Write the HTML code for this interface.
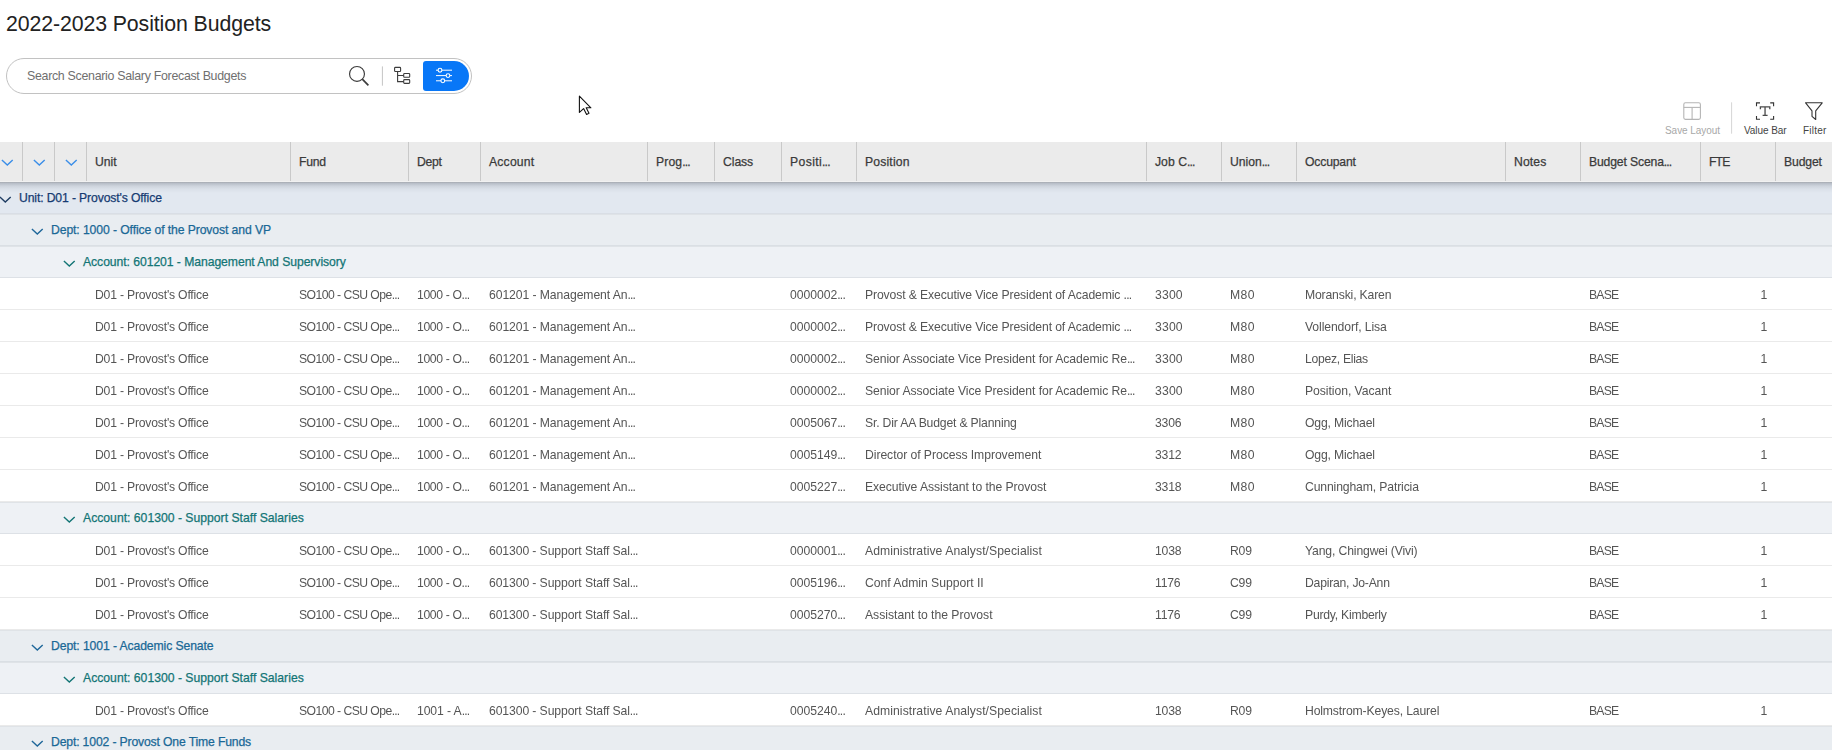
<!DOCTYPE html>
<html><head><meta charset="utf-8"><title>2022-2023 Position Budgets</title>
<style>
*{box-sizing:border-box;margin:0;padding:0}
html,body{width:1832px;height:750px;overflow:hidden;background:#fff}
body{position:relative;font-family:"Liberation Sans",sans-serif;color:#333}
.title{position:absolute;left:6px;top:11px;font-size:21.3px;line-height:26px;color:#222;white-space:nowrap;letter-spacing:-0.1px}
.search{position:absolute;left:6px;top:58px;width:466px;height:36px;border:1px solid #c2c2c2;border-radius:18px;background:#fff}
.ph{position:absolute;left:20px;top:10px;font-size:12.4px;line-height:15px;color:#6f6f6f;white-space:nowrap;letter-spacing:-0.30px}
.abs{position:absolute}
svg{display:block}
.hdr{position:absolute;left:0;top:142px;width:1832px;height:40px;background:#ebebeb}
.sep{position:absolute;top:0;width:1px;height:40px;background:#c9c9c9}
.ht{position:absolute;top:13px;font-size:12.2px;line-height:15px;color:#3a3a3a;-webkit-text-stroke:0.25px #3a3a3a;white-space:nowrap;letter-spacing:-0.2px}
.shadow{position:absolute;left:0;top:182px;width:1832px;height:11px;background:linear-gradient(to bottom,rgba(20,28,45,.28) 0px,rgba(20,28,45,.2) 1.5px,rgba(20,28,45,.1) 4px,rgba(20,28,45,.04) 7px,rgba(20,28,45,0) 11px);z-index:5}
.hline{position:absolute;left:0;top:39px;width:1832px;height:1px;background:#f1f1f1}
.row{position:absolute;left:0;width:1832px;height:32px;border-bottom:1px solid #eaeaea}
.dr{will-change:transform}
.g1,.g2,.g3{box-shadow:inset 0 1px 0 #dfe3e7}
.g1{background:#e2e8f0;border-bottom-color:#d9dee5}
.g2{background:#e9edf1;border-bottom-color:#dadfe4}
.g3{background:#eef1f5;border-bottom-color:#dde1e6}
.gt{position:absolute;top:9px;font-size:12.2px;line-height:15px;white-space:nowrap;letter-spacing:-0.08px;-webkit-text-stroke:0.25px currentColor}
.g1 .gt{color:#163b72}
.g2 .gt{color:#1a6896}
.g3 .gt{color:#137575}
.c{position:absolute;top:10px;font-size:12.2px;line-height:15px;color:#555;white-space:nowrap;letter-spacing:-0.2px}
.el{letter-spacing:-0.85px}
.tb{position:absolute;top:124.6px;font-size:10px;line-height:12px;white-space:nowrap;text-align:center;color:#444}
</style></head><body>
<div class="title">2022-2023 Position Budgets</div>
<div class="search"><div class="ph">Search Scenario Salary Forecast Budgets</div>
<svg class="abs" style="left:-1px;top:-1px" width="466" height="36" viewBox="6 58 466 36">
 <circle cx="357" cy="73.9" r="7.45" fill="none" stroke="#3c3c3c" stroke-width="1.15"/>
 <line x1="362.3" y1="79.2" x2="368.4" y2="85.3" stroke="#3c3c3c" stroke-width="1.7"/>
 <line x1="382.4" y1="66.4" x2="382.4" y2="85.7" stroke="#c4c4c4" stroke-width="1"/>
 <rect x="394.6" y="67.4" width="6" height="4.1" rx="0.8" fill="none" stroke="#3c3c3c" stroke-width="1.1"/>
 <path d="M397.6 71.5 V81.6 H403.7 M397.6 75.5 H403.7" fill="none" stroke="#3c3c3c" stroke-width="1.1"/>
 <rect x="403.7" y="73.5" width="6" height="3.8" rx="0.8" fill="none" stroke="#3c3c3c" stroke-width="1.1"/>
 <rect x="403.7" y="79.6" width="6" height="3.8" rx="0.8" fill="none" stroke="#3c3c3c" stroke-width="1.1"/>
 <path d="M423 64 a3 3 0 0 1 3 -3 H454 a15 15 0 0 1 0 30 H426 a3 3 0 0 1 -3 -3 Z" fill="#0877f7"/>
 <g stroke="#fff" stroke-width="1" fill="none">
  <line x1="436" y1="70.2" x2="452" y2="70.2"/>
  <line x1="436" y1="75.6" x2="452" y2="75.6"/>
  <line x1="436" y1="80.8" x2="452" y2="80.8"/>
 </g>
 <g stroke="#fff" stroke-width="1.1" fill="#0877f7">
  <circle cx="440" cy="70.2" r="1.9"/>
  <circle cx="448" cy="75.6" r="1.9"/>
  <circle cx="442.8" cy="80.8" r="1.9"/>
 </g>
</svg>
</div>

<svg class="abs" style="left:0;top:0" width="1832" height="140" viewBox="0 0 1832 140">
 <rect x="1683.8" y="102.8" width="16.6" height="16.6" rx="1.6" fill="none" stroke="#b5b5b5" stroke-width="1.1"/>
 <line x1="1683.8" y1="107.4" x2="1700.4" y2="107.4" stroke="#b5b5b5" stroke-width="1.1"/>
 <line x1="1692.1" y1="107.4" x2="1692.1" y2="119.4" stroke="#b5b5b5" stroke-width="1.1"/>
 <line x1="1731.6" y1="102.3" x2="1731.6" y2="133.7" stroke="#d6d6d6" stroke-width="1"/>
 <path d="M1756.5 106.2 V102.9 H1760 M1770.2 102.9 H1773.6 V106.2 M1773.6 116 V119.2 H1770.2 M1760 119.2 H1756.5 V116" fill="none" stroke="#333" stroke-width="1.1"/>
 <path d="M1760.4 109.2 V106.8 H1769.8 V109.2 M1765.05 106.8 V115.6 M1762.6 115.4 H1767.6" fill="none" stroke="#4a4a4a" stroke-width="1.3"/>
 <path d="M1805.6 102.8 H1822.2 L1815.7 110.8 V119.5 L1812 116.3 V110.8 Z" fill="none" stroke="#333" stroke-width="1.1" stroke-linejoin="round"/>
</svg>

<div class="tb" style="left:1665px;color:#a8a8a8;letter-spacing:-0.05px">Save Layout</div>
<div class="tb" style="left:1744px;letter-spacing:-0.07px">Value Bar</div>
<div class="tb" style="left:1803px;letter-spacing:0.2px">Filter</div>

<div class="hdr">
<div class="sep" style="left:22px"></div>
<div class="sep" style="left:54px"></div>
<div class="sep" style="left:86px"></div>
<div class="sep" style="left:290px"></div>
<div class="sep" style="left:408px"></div>
<div class="sep" style="left:480px"></div>
<div class="sep" style="left:647px"></div>
<div class="sep" style="left:714px"></div>
<div class="sep" style="left:781px"></div>
<div class="sep" style="left:856px"></div>
<div class="sep" style="left:1146px"></div>
<div class="sep" style="left:1221px"></div>
<div class="sep" style="left:1296px"></div>
<div class="sep" style="left:1505px"></div>
<div class="sep" style="left:1580px"></div>
<div class="sep" style="left:1700px"></div>
<div class="sep" style="left:1775px"></div>
<div class="abs" style="left:0.9px;top:17.2px"><svg width="13" height="8" viewBox="0 0 13 8"><path d="M0.9 0.9 L6.3 6.1 L11.7 0.9" fill="none" stroke="#3b8ee8" stroke-width="1.4"/></svg></div>
<div class="abs" style="left:32.7px;top:17.2px"><svg width="13" height="8" viewBox="0 0 13 8"><path d="M0.9 0.9 L6.3 6.1 L11.7 0.9" fill="none" stroke="#3b8ee8" stroke-width="1.4"/></svg></div>
<div class="abs" style="left:64.7px;top:17.2px"><svg width="13" height="8" viewBox="0 0 13 8"><path d="M0.9 0.9 L6.3 6.1 L11.7 0.9" fill="none" stroke="#3b8ee8" stroke-width="1.4"/></svg></div>
<div class="ht" style="left:95px;letter-spacing:-0.020px">Unit</div>
<div class="ht" style="left:299px;letter-spacing:-0.260px">Fund</div>
<div class="ht" style="left:417px;letter-spacing:-0.260px">Dept</div>
<div class="ht" style="left:489px;letter-spacing:0.190px">Account</div>
<div class="ht" style="left:656px;letter-spacing:0.100px">Prog<span class="el">...</span></div>
<div class="ht" style="left:723px;letter-spacing:-0.065px">Class</div>
<div class="ht" style="left:790px;letter-spacing:0.376px">Positi<span class="el">...</span></div>
<div class="ht" style="left:865px;letter-spacing:0.160px">Position</div>
<div class="ht" style="left:1155px;letter-spacing:0.025px">Job C<span class="el">...</span></div>
<div class="ht" style="left:1230px;letter-spacing:-0.020px">Union<span class="el">...</span></div>
<div class="ht" style="left:1305px;letter-spacing:-0.174px">Occupant</div>
<div class="ht" style="left:1514px;letter-spacing:0.115px">Notes</div>
<div class="ht" style="left:1589px;letter-spacing:-0.151px">Budget Scena<span class="el">...</span></div>
<div class="ht" style="left:1709px;letter-spacing:-0.830px">FTE</div>
<div class="ht" style="left:1784px;letter-spacing:-0.128px">Budget</div>
<div class="hline"></div></div><div class="shadow"></div>
<div class="row g1" style="top:182px"><div class="abs" style="left:-0.9px;top:13.8px"><svg width="13" height="8" viewBox="0 0 13 8"><path d="M0.9 0.9 L6.3 6.1 L11.7 0.9" fill="none" stroke="#1f3d63" stroke-width="1.4"/></svg></div><div class="gt" style="left:19px;letter-spacing:-0.127px">Unit: D01 - Provost's Office</div></div>
<div class="row g2" style="top:214px"><div class="abs" style="left:30.950000000000003px;top:13.8px"><svg width="13" height="8" viewBox="0 0 13 8"><path d="M0.9 0.9 L6.3 6.1 L11.7 0.9" fill="none" stroke="#1f679a" stroke-width="1.4"/></svg></div><div class="gt" style="left:51px;letter-spacing:-0.098px">Dept: 1000 - Office of the Provost and VP</div></div>
<div class="row g3" style="top:246px"><div class="abs" style="left:62.800000000000004px;top:13.8px"><svg width="13" height="8" viewBox="0 0 13 8"><path d="M0.9 0.9 L6.3 6.1 L11.7 0.9" fill="none" stroke="#137575" stroke-width="1.4"/></svg></div><div class="gt" style="left:83px;letter-spacing:-0.063px">Account: 601201 - Management And Supervisory</div></div>
<div class="row dr" style="top:278px">
<div class="c" style="left:95px;letter-spacing:-0.200px">D01 - Provost's Office</div>
<div class="c" style="left:299px;letter-spacing:-0.547px">SO100 - CSU Ope<span class="el">...</span></div>
<div class="c" style="left:417px;letter-spacing:-0.354px">1000 - O<span class="el">...</span></div>
<div class="c" style="left:489px;letter-spacing:-0.080px">601201 - Management An<span class="el">...</span></div>
<div class="c" style="left:790px;letter-spacing:-0.020px">0000002<span class="el">...</span></div>
<div class="c" style="left:865px;letter-spacing:-0.114px">Provost &amp; Executive Vice President of Academic <span class="el">...</span></div>
<div class="c" style="left:1155px;letter-spacing:0.160px">3300</div>
<div class="c" style="left:1230px;letter-spacing:0.430px">M80</div>
<div class="c" style="left:1305px;letter-spacing:-0.161px">Moranski, Karen</div>
<div class="c" style="left:1589px;letter-spacing:-0.800px">BASE</div>
<div class="c" style="left:1700px;width:67px;text-align:right">1</div>
</div>
<div class="row dr" style="top:310px">
<div class="c" style="left:95px;letter-spacing:-0.200px">D01 - Provost's Office</div>
<div class="c" style="left:299px;letter-spacing:-0.547px">SO100 - CSU Ope<span class="el">...</span></div>
<div class="c" style="left:417px;letter-spacing:-0.354px">1000 - O<span class="el">...</span></div>
<div class="c" style="left:489px;letter-spacing:-0.080px">601201 - Management An<span class="el">...</span></div>
<div class="c" style="left:790px;letter-spacing:-0.020px">0000002<span class="el">...</span></div>
<div class="c" style="left:865px;letter-spacing:-0.114px">Provost &amp; Executive Vice President of Academic <span class="el">...</span></div>
<div class="c" style="left:1155px;letter-spacing:0.160px">3300</div>
<div class="c" style="left:1230px;letter-spacing:0.430px">M80</div>
<div class="c" style="left:1305px;letter-spacing:-0.104px">Vollendorf, Lisa</div>
<div class="c" style="left:1589px;letter-spacing:-0.800px">BASE</div>
<div class="c" style="left:1700px;width:67px;text-align:right">1</div>
</div>
<div class="row dr" style="top:342px">
<div class="c" style="left:95px;letter-spacing:-0.200px">D01 - Provost's Office</div>
<div class="c" style="left:299px;letter-spacing:-0.547px">SO100 - CSU Ope<span class="el">...</span></div>
<div class="c" style="left:417px;letter-spacing:-0.354px">1000 - O<span class="el">...</span></div>
<div class="c" style="left:489px;letter-spacing:-0.080px">601201 - Management An<span class="el">...</span></div>
<div class="c" style="left:790px;letter-spacing:-0.020px">0000002<span class="el">...</span></div>
<div class="c" style="left:865px;letter-spacing:-0.071px">Senior Associate Vice President for Academic Re<span class="el">...</span></div>
<div class="c" style="left:1155px;letter-spacing:0.160px">3300</div>
<div class="c" style="left:1230px;letter-spacing:0.430px">M80</div>
<div class="c" style="left:1305px;letter-spacing:-0.298px">Lopez, Elias</div>
<div class="c" style="left:1589px;letter-spacing:-0.800px">BASE</div>
<div class="c" style="left:1700px;width:67px;text-align:right">1</div>
</div>
<div class="row dr" style="top:374px">
<div class="c" style="left:95px;letter-spacing:-0.200px">D01 - Provost's Office</div>
<div class="c" style="left:299px;letter-spacing:-0.547px">SO100 - CSU Ope<span class="el">...</span></div>
<div class="c" style="left:417px;letter-spacing:-0.354px">1000 - O<span class="el">...</span></div>
<div class="c" style="left:489px;letter-spacing:-0.080px">601201 - Management An<span class="el">...</span></div>
<div class="c" style="left:790px;letter-spacing:-0.020px">0000002<span class="el">...</span></div>
<div class="c" style="left:865px;letter-spacing:-0.071px">Senior Associate Vice President for Academic Re<span class="el">...</span></div>
<div class="c" style="left:1155px;letter-spacing:0.160px">3300</div>
<div class="c" style="left:1230px;letter-spacing:0.430px">M80</div>
<div class="c" style="left:1305px;letter-spacing:-0.056px">Position, Vacant</div>
<div class="c" style="left:1589px;letter-spacing:-0.800px">BASE</div>
<div class="c" style="left:1700px;width:67px;text-align:right">1</div>
</div>
<div class="row dr" style="top:406px">
<div class="c" style="left:95px;letter-spacing:-0.200px">D01 - Provost's Office</div>
<div class="c" style="left:299px;letter-spacing:-0.547px">SO100 - CSU Ope<span class="el">...</span></div>
<div class="c" style="left:417px;letter-spacing:-0.354px">1000 - O<span class="el">...</span></div>
<div class="c" style="left:489px;letter-spacing:-0.080px">601201 - Management An<span class="el">...</span></div>
<div class="c" style="left:790px;letter-spacing:-0.020px">0005067<span class="el">...</span></div>
<div class="c" style="left:865px;letter-spacing:-0.173px">Sr. Dir AA Budget &amp; Planning</div>
<div class="c" style="left:1155px;letter-spacing:-0.200px">3306</div>
<div class="c" style="left:1230px;letter-spacing:0.430px">M80</div>
<div class="c" style="left:1305px;letter-spacing:-0.167px">Ogg, Michael</div>
<div class="c" style="left:1589px;letter-spacing:-0.800px">BASE</div>
<div class="c" style="left:1700px;width:67px;text-align:right">1</div>
</div>
<div class="row dr" style="top:438px">
<div class="c" style="left:95px;letter-spacing:-0.200px">D01 - Provost's Office</div>
<div class="c" style="left:299px;letter-spacing:-0.547px">SO100 - CSU Ope<span class="el">...</span></div>
<div class="c" style="left:417px;letter-spacing:-0.354px">1000 - O<span class="el">...</span></div>
<div class="c" style="left:489px;letter-spacing:-0.080px">601201 - Management An<span class="el">...</span></div>
<div class="c" style="left:790px;letter-spacing:-0.020px">0005149<span class="el">...</span></div>
<div class="c" style="left:865px;letter-spacing:-0.062px">Director of Process Improvement</div>
<div class="c" style="left:1155px;letter-spacing:-0.200px">3312</div>
<div class="c" style="left:1230px;letter-spacing:0.430px">M80</div>
<div class="c" style="left:1305px;letter-spacing:-0.167px">Ogg, Michael</div>
<div class="c" style="left:1589px;letter-spacing:-0.800px">BASE</div>
<div class="c" style="left:1700px;width:67px;text-align:right">1</div>
</div>
<div class="row dr" style="top:470px">
<div class="c" style="left:95px;letter-spacing:-0.200px">D01 - Provost's Office</div>
<div class="c" style="left:299px;letter-spacing:-0.547px">SO100 - CSU Ope<span class="el">...</span></div>
<div class="c" style="left:417px;letter-spacing:-0.354px">1000 - O<span class="el">...</span></div>
<div class="c" style="left:489px;letter-spacing:-0.080px">601201 - Management An<span class="el">...</span></div>
<div class="c" style="left:790px;letter-spacing:-0.020px">0005227<span class="el">...</span></div>
<div class="c" style="left:865px;letter-spacing:-0.064px">Executive Assistant to the Provost</div>
<div class="c" style="left:1155px;letter-spacing:-0.200px">3318</div>
<div class="c" style="left:1230px;letter-spacing:0.430px">M80</div>
<div class="c" style="left:1305px;letter-spacing:-0.134px">Cunningham, Patricia</div>
<div class="c" style="left:1589px;letter-spacing:-0.800px">BASE</div>
<div class="c" style="left:1700px;width:67px;text-align:right">1</div>
</div>
<div class="row g3" style="top:502px"><div class="abs" style="left:62.800000000000004px;top:13.8px"><svg width="13" height="8" viewBox="0 0 13 8"><path d="M0.9 0.9 L6.3 6.1 L11.7 0.9" fill="none" stroke="#137575" stroke-width="1.4"/></svg></div><div class="gt" style="left:83px;letter-spacing:0.003px">Account: 601300 - Support Staff Salaries</div></div>
<div class="row dr" style="top:534px">
<div class="c" style="left:95px;letter-spacing:-0.200px">D01 - Provost's Office</div>
<div class="c" style="left:299px;letter-spacing:-0.547px">SO100 - CSU Ope<span class="el">...</span></div>
<div class="c" style="left:417px;letter-spacing:-0.354px">1000 - O<span class="el">...</span></div>
<div class="c" style="left:489px;letter-spacing:-0.099px">601300 - Support Staff Sal<span class="el">...</span></div>
<div class="c" style="left:790px;letter-spacing:-0.020px">0000001<span class="el">...</span></div>
<div class="c" style="left:865px;letter-spacing:0.064px">Administrative Analyst/Specialist</div>
<div class="c" style="left:1155px;letter-spacing:-0.200px">1038</div>
<div class="c" style="left:1230px;letter-spacing:-0.200px">R09</div>
<div class="c" style="left:1305px;letter-spacing:-0.137px">Yang, Chingwei (Vivi)</div>
<div class="c" style="left:1589px;letter-spacing:-0.800px">BASE</div>
<div class="c" style="left:1700px;width:67px;text-align:right">1</div>
</div>
<div class="row dr" style="top:566px">
<div class="c" style="left:95px;letter-spacing:-0.200px">D01 - Provost's Office</div>
<div class="c" style="left:299px;letter-spacing:-0.547px">SO100 - CSU Ope<span class="el">...</span></div>
<div class="c" style="left:417px;letter-spacing:-0.354px">1000 - O<span class="el">...</span></div>
<div class="c" style="left:489px;letter-spacing:-0.099px">601300 - Support Staff Sal<span class="el">...</span></div>
<div class="c" style="left:790px;letter-spacing:-0.020px">0005196<span class="el">...</span></div>
<div class="c" style="left:865px;letter-spacing:-0.029px">Conf Admin Support II</div>
<div class="c" style="left:1155px;letter-spacing:-0.200px">1176</div>
<div class="c" style="left:1230px;letter-spacing:-0.200px">C99</div>
<div class="c" style="left:1305px;letter-spacing:-0.226px">Dapiran, Jo-Ann</div>
<div class="c" style="left:1589px;letter-spacing:-0.800px">BASE</div>
<div class="c" style="left:1700px;width:67px;text-align:right">1</div>
</div>
<div class="row dr" style="top:598px">
<div class="c" style="left:95px;letter-spacing:-0.200px">D01 - Provost's Office</div>
<div class="c" style="left:299px;letter-spacing:-0.547px">SO100 - CSU Ope<span class="el">...</span></div>
<div class="c" style="left:417px;letter-spacing:-0.354px">1000 - O<span class="el">...</span></div>
<div class="c" style="left:489px;letter-spacing:-0.099px">601300 - Support Staff Sal<span class="el">...</span></div>
<div class="c" style="left:790px;letter-spacing:-0.020px">0005270<span class="el">...</span></div>
<div class="c" style="left:865px;letter-spacing:-0.020px">Assistant to the Provost</div>
<div class="c" style="left:1155px;letter-spacing:-0.200px">1176</div>
<div class="c" style="left:1230px;letter-spacing:-0.200px">C99</div>
<div class="c" style="left:1305px;letter-spacing:-0.226px">Purdy, Kimberly</div>
<div class="c" style="left:1589px;letter-spacing:-0.800px">BASE</div>
<div class="c" style="left:1700px;width:67px;text-align:right">1</div>
</div>
<div class="row g2" style="top:630px"><div class="abs" style="left:30.950000000000003px;top:13.8px"><svg width="13" height="8" viewBox="0 0 13 8"><path d="M0.9 0.9 L6.3 6.1 L11.7 0.9" fill="none" stroke="#1f679a" stroke-width="1.4"/></svg></div><div class="gt" style="left:51px;letter-spacing:-0.100px">Dept: 1001 - Academic Senate</div></div>
<div class="row g3" style="top:662px"><div class="abs" style="left:62.800000000000004px;top:13.8px"><svg width="13" height="8" viewBox="0 0 13 8"><path d="M0.9 0.9 L6.3 6.1 L11.7 0.9" fill="none" stroke="#137575" stroke-width="1.4"/></svg></div><div class="gt" style="left:83px;letter-spacing:0.003px">Account: 601300 - Support Staff Salaries</div></div>
<div class="row dr" style="top:694px">
<div class="c" style="left:95px;letter-spacing:-0.200px">D01 - Provost's Office</div>
<div class="c" style="left:299px;letter-spacing:-0.547px">SO100 - CSU Ope<span class="el">...</span></div>
<div class="c" style="left:417px;letter-spacing:-0.097px">1001 - A<span class="el">...</span></div>
<div class="c" style="left:489px;letter-spacing:-0.099px">601300 - Support Staff Sal<span class="el">...</span></div>
<div class="c" style="left:790px;letter-spacing:-0.020px">0005240<span class="el">...</span></div>
<div class="c" style="left:865px;letter-spacing:0.064px">Administrative Analyst/Specialist</div>
<div class="c" style="left:1155px;letter-spacing:-0.200px">1038</div>
<div class="c" style="left:1230px;letter-spacing:-0.200px">R09</div>
<div class="c" style="left:1305px;letter-spacing:-0.143px">Holmstrom-Keyes, Laurel</div>
<div class="c" style="left:1589px;letter-spacing:-0.800px">BASE</div>
<div class="c" style="left:1700px;width:67px;text-align:right">1</div>
</div>
<div class="row g2" style="top:726px"><div class="abs" style="left:30.950000000000003px;top:13.8px"><svg width="13" height="8" viewBox="0 0 13 8"><path d="M0.9 0.9 L6.3 6.1 L11.7 0.9" fill="none" stroke="#1f679a" stroke-width="1.4"/></svg></div><div class="gt" style="left:51px;letter-spacing:-0.149px">Dept: 1002 - Provost One Time Funds</div></div>
<svg class="abs" style="left:574px;top:92px;z-index:10" width="24" height="28" viewBox="574 92 24 28">
<path d="M579.4 96.2 L579.4 112.4 L583.6 108.6 L586.6 114.4 L589 113.3 L586.2 107.8 L590.9 107.8 Z" fill="#fff" stroke="#111" stroke-width="1.1" stroke-linejoin="round"/>
</svg>
</body></html>
